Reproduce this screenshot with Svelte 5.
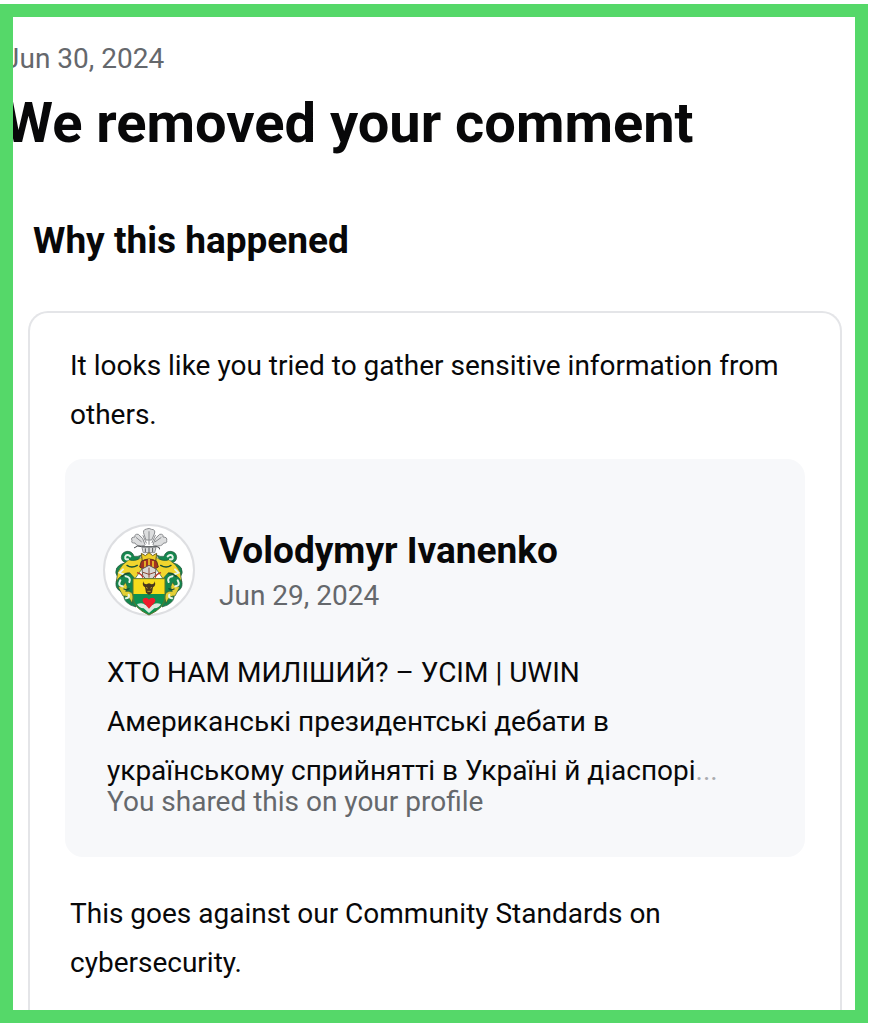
<script lang="ts">
  const notice = {
    date: 'Jun 30, 2024',
    title: 'We removed your comment',
    reason: 'It looks like you tried to gather sensitive information from others.',
    rule: 'This goes against our Community Standards on cybersecurity.',
  };

  const post = {
    author: 'Volodymyr Ivanenko',
    date: 'Jun 29, 2024',
    lines: [
      'ХТО НАМ МИЛІШИЙ? – УСІМ | UWIN',
      'Американські президентські дебати в',
      'українському сприйнятті в Україні й діаспорі',
    ],
    note: 'You shared this on your profile',
  };
</script>

<main class="frame">
  <header>
    <p class="date">{notice.date}</p>
    <h1>{notice.title}</h1>
  </header>

  <h2>Why this happened</h2>

  <section class="card">
    <p class="text">{notice.reason}</p>

    <article class="post">
      <div class="byline">
        <svg class="avatar" viewBox="22 27 276 276" role="img" aria-label="Coat of arms">
          <circle cx="160" cy="165" r="135" fill="#fff" stroke="#dedfe2" stroke-width="6" />

          <!-- plumes -->
          <g fill="#dcddde" stroke="#8a8c8f" stroke-width="3" stroke-linecap="round">
            <path d="M145 58q-6-14 8-16 8-4 14 1 14 0 9 14l-8 18h-16z" />
            <path d="M148 88q-4-20-20-30-12-2-10 8-14 0-9 11-4 8 9 7 5 12 27 8z" />
            <path d="M172 88q4-20 20-30 12-2 10 8 14 0 11 11 2 8-9 7-5 12-27 8z" />
            <path d="M122 68l15 12M196 68l-17 12M160 50v38M142 62l10 22M179 61l-10 22" fill="none" />
            <path d="M116 98q10-9 22-3h46q10 2 8 7" fill="none" stroke="#45484b" />
            <path d="M140 97h41l-4 16h-33z" />
          </g>
          <path d="M149 100v11M160 98v14M171 99v12" stroke="#55585b" stroke-width="3" />

          <!-- mantling -->
          <g stroke="#26553a" stroke-width="2" stroke-linejoin="round">
            <path d="M137 120q-10 6-22 4-5-16-21-15-17 3-17 19 2 14 15 15-20 2-29 16-7 16 4 28-11 18-3 33 8 11 21 12-3 20 8 30 10 10 28 14l-4-74V170q0-25 20-50z" fill="#15864e" />
            <path d="M183 120q10 6 22 4 5-16 21-15 17 3 17 19-2 14-15 15 20 2 29 16 7 16-4 28 11 18 3 33-8 11-21 12 3 20-8 30-10 10-28 14l4-74V170q0-25-20-50z" fill="#15864e" />
            <path d="M140 125q-20 17-40 9-23 13-34 38l-4 28q16-27 40-27l16 18 22-31z" fill="#f1d52e" />
            <path d="M180 125q20 17 40 9 23 13 34 38l4 28q-16-27-40-27l-16 18-22-31z" fill="#f1d52e" />
            <path d="M67 215q17 3 21-13 12 12 2 27 20-3 23 16l-4 20q-10-25-27-22z" fill="#e3cf36" />
            <path d="M253 215q-17 3-21-13-12 12-2 27-20-3-23 16l4 20q10-25 27-22z" fill="#e3cf36" />
          </g>
          <g fill="none" stroke-linecap="round">
            <path d="M104 124q-11-8-15 1-2 10 8 8M82 163l-10 10 14 6M74 196q-9 17 7 18M90 184q17 3 11 17M91 250q12-2 8-11" stroke="#e6f4e9" stroke-width="6" />
            <path d="M216 124q11-8 15 1 2 10-8 8M238 163l10 10-14 6M246 196q9 17-7 18M230 184q-17 3-11 17M229 250q-12-2-8-11" stroke="#e6f4e9" stroke-width="6" />
            <path d="M94 151q14 10 31 0M78 185q13-12 22-9M85 222q9 4 15-1" stroke="#174f35" stroke-width="4" />
            <path d="M226 151q-14 10-31 0M242 185q-13-12-22-9M235 222q-9 4-15-1" stroke="#174f35" stroke-width="4" />
          </g>

          <!-- crown and helmet -->
          <path d="M137 115l12 7 11-9 11 9 12-7-3 24h-40z" fill="#efcf28" stroke="#6e6122" stroke-width="3" />
          <path d="M137 139q23-14 46 0l5 17-15 8h-27l-14-8z" fill="#a5331f" stroke="#5b3520" stroke-width="3" />
          <path d="M148 138v18M160 132v21M172 138v18" stroke="#efc52a" stroke-width="5" />
          <path d="M139 162l21-11 21 11-2 19-12 14h-14l-12-14z" fill="#d8d8d6" stroke="#64594c" stroke-width="3" />
          <path d="M142 172l18 6 18-6M160 158v30" fill="none" stroke="#8a4936" stroke-width="3" />
          <path d="M124 173q14 4 18 15M196 173q-14 4-18 15" fill="none" stroke="#b33327" stroke-width="4" />

          <!-- shield -->
          <path d="M112 191h96v55q0 32-48 54-48-22-48-54z" fill="#0f9150" />
          <path d="M112 191h96v46h-96z" fill="#f8dc1c" />
          <path d="M112 191h96v55q0 32-48 54-48-22-48-54z" fill="none" stroke="#5e762c" stroke-width="3" />
          <path d="M143 199q1 9 9 9l8-3 8 3q8 0 9-9 5 13-5 18l-3 16-9 7-9-7-3-16q-10-5-5-18z" fill="#4a371d" />
          <path d="M151 217l5 3M169 217l-5 3M155 229h10" stroke="#b99a2a" stroke-width="3" />
          <path d="M124 267q18-5 25 3h22q7-8 25-3-5 12-20 13l-16 14-16-14q-15-1-20-13z" fill="#dce9df" />
          <path d="M160 281l-18-20q-4-12 8-13 7 0 10 6 3-6 10-6 12 1 8 13z" fill="#ec1c2b" />
        </svg>
        <div class="who">
          <h3>{post.author}</h3>
          <p class="date">{post.date}</p>
        </div>
      </div>

      <p class="excerpt">
        {#each post.lines as line, i}
          {line}{#if i < post.lines.length - 1}<br />{:else}<span class="more">...</span>{/if}
        {/each}
      </p>
      <p class="note">{post.note}</p>
    </article>

    <p class="text">{notice.rule}</p>
  </section>
</main>

<style>
  :global(body) { margin: 0; background: #fff; }

  .frame {
    box-sizing: border-box;
    min-height: calc(100vh - 4px);
    margin: 4px 2px 0 0;
    padding-top: 26px;
    border: 13px solid #55d869;
    display: flex; flex-direction: column;
    overflow: hidden;
    background: #fff;
    color: #080809;
    font-family: Roboto, 'Noto Sans', sans-serif;
    font-size: 28px;
    line-height: 49px;
  }

  h1, h2, h3, p { margin: 0; }

  /* the heading runs under the left edge of the frame */
  header { margin-left: -9px; }
  .date { color: #65686c; line-height: 32px; }
  h1 { margin-top: 16px; font-size: 56px; line-height: 64px; font-weight: 700; }
  h2 { margin: 64px 20px 0; font-size: 37px; line-height: 44px; font-weight: 700; }

  .card {
    flex: 1;
    margin: 48px 13px 0 15px;
    padding: 28px 35px 20px;
    border: 2px solid #e4e5e8; border-bottom: none;
    border-radius: 20px 20px 0 0;
  }
  .text { padding: 0 5px; }

  .post {
    margin: 20px 0 32px;
    padding: 65px 40px 39px 42px;
    border-radius: 18px;
    background: #f7f8fa;
  }
  .byline { display: flex; align-items: center; gap: 24px; margin-left: -4px; }
  .avatar { width: 92px; height: 92px; flex: none; }
  .who { display: flex; flex-direction: column; gap: 7px; }
  h3 { font-size: 37px; line-height: 44px; font-weight: 700; }

  .excerpt { margin-top: 32px; }
  .more { color: #a9abaf; }
  .note { margin-top: -9px; color: #65686c; line-height: 32px; }
</style>
